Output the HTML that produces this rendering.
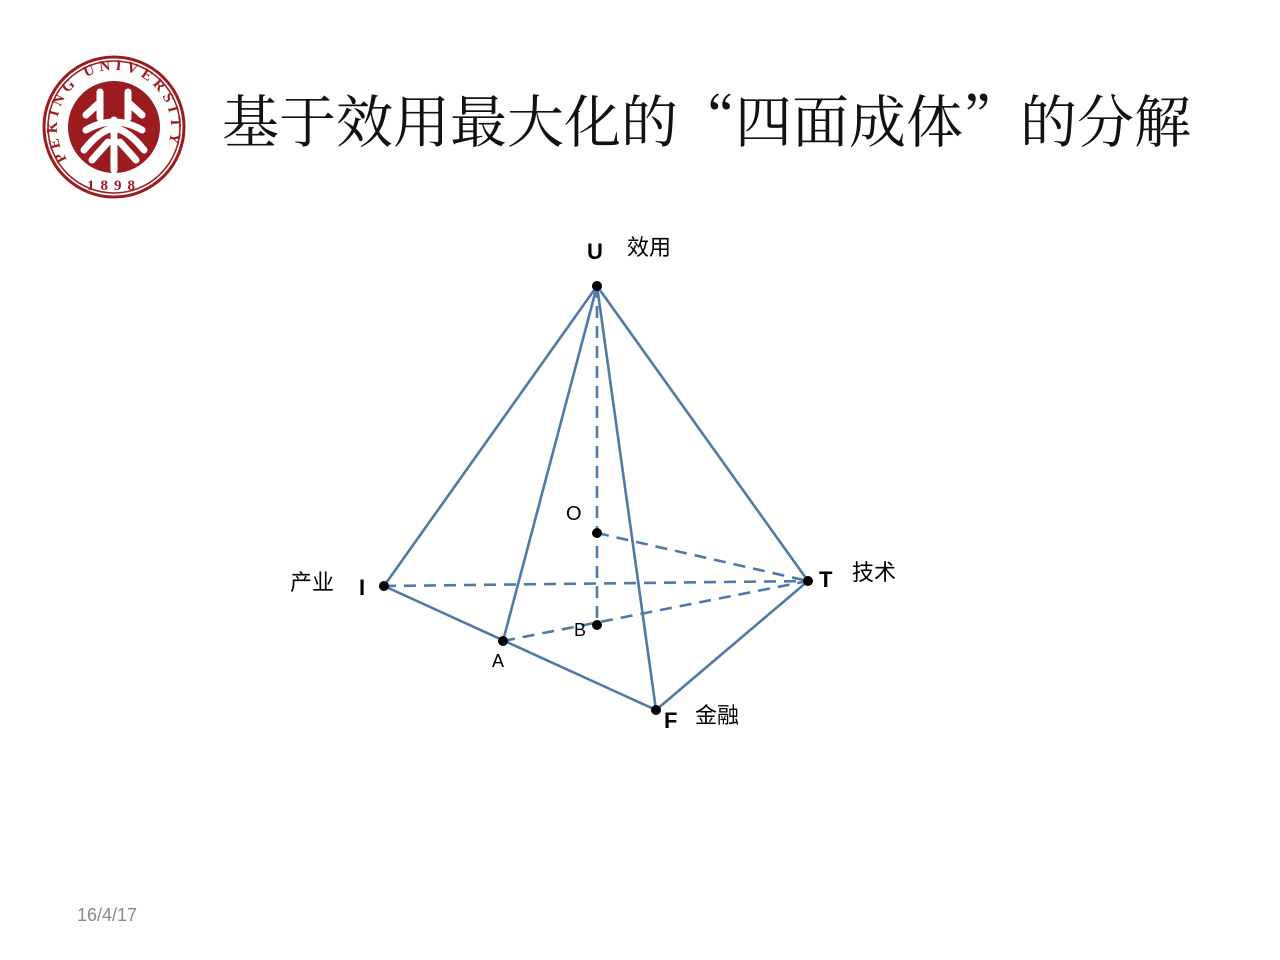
<!DOCTYPE html>
<html><head><meta charset="utf-8"><style>
body{margin:0;background:#fff;}
.wrap{position:relative;width:1280px;height:960px;overflow:hidden;background:#fff;}
.title{position:absolute;left:222px;top:78px;font-family:"Noto Serif CJK SC",serif;font-size:57px;color:#111;white-space:nowrap;line-height:80px;}
.date{position:absolute;left:77px;top:905px;font-family:"Liberation Sans",sans-serif;font-size:18px;color:#8a8a8a;}
</style></head><body><div class="wrap">
<svg width="1280" height="960" style="position:absolute;left:0;top:0">
<defs><path id="arc" d="M 70.3 163.6 A 57 57 0 1 1 157.7 163.6"/></defs>
<g>
<circle cx="114" cy="127" r="70" fill="#fff" stroke="#9b1b1f" stroke-width="3"/>
<circle cx="114" cy="127" r="66" fill="none" stroke="#9b1b1f" stroke-width="1.5"/>
<circle cx="114" cy="127" r="46" fill="#9b1b1f"/>
<text font-family="Liberation Serif,serif" font-size="15" font-weight="bold" fill="#9b1b1f" letter-spacing="4.5"><textPath href="#arc" startOffset="2%">PEKING UNIVERSITY</textPath></text>
<text x="114" y="190" text-anchor="middle" font-family="Liberation Serif,serif" font-size="15" font-weight="bold" fill="#9b1b1f" letter-spacing="6">1898</text>
<g stroke="#fff" stroke-width="7" fill="none" stroke-linecap="round">
<path d="M100 92 L100 118 M128 92 L128 118 M86 115 L98 104 M142 115 L130 104 M114 120 L114 170 M86 130 Q100 122 114 122 Q128 122 142 130 M84 150 Q100 130 114 128 Q128 130 144 150 M92 160 L108 142 M136 160 L120 142"/>
</g>
</g>
<g stroke="#4f79a6" stroke-width="2.6" fill="none">
<line x1="597" y1="286" x2="384" y2="586"/>
<line x1="597" y1="286" x2="808" y2="581"/>
<line x1="597" y1="286" x2="503" y2="641"/>
<line x1="597" y1="286" x2="656" y2="710"/>
<line x1="384" y1="586" x2="656" y2="710"/>
<line x1="656" y1="710" x2="808" y2="581"/>
<g stroke-dasharray="12,8">
<line x1="597" y1="286" x2="597" y2="625"/>
<line x1="384" y1="586" x2="808" y2="581"/>
<line x1="597" y1="533" x2="808" y2="581"/>
<line x1="503" y1="641" x2="808" y2="581"/>
</g>
</g>
<g fill="#000">
<circle cx="597" cy="286" r="5"/><circle cx="384" cy="586" r="5"/><circle cx="808" cy="581" r="5"/>
<circle cx="656" cy="710" r="5"/><circle cx="503" cy="641" r="5"/><circle cx="597" cy="625" r="5"/><circle cx="597" cy="533" r="5"/>
</g>
<g font-family="Liberation Sans,'Noto Sans CJK SC',sans-serif" fill="#000">
<text x="587" y="259" font-size="22" font-weight="bold">U</text>
<text x="627" y="255" font-size="22">效用</text>
<text x="359" y="595" font-size="22" font-weight="bold">I</text>
<text x="290" y="590" font-size="22">产业</text>
<text x="819" y="587" font-size="22" font-weight="bold">T</text>
<text x="852" y="580" font-size="22">技术</text>
<text x="664" y="728" font-size="22" font-weight="bold">F</text>
<text x="695" y="723" font-size="22">金融</text>
<text x="566" y="520" font-size="20">O</text>
<text x="574" y="636" font-size="18">B</text>
<text x="492" y="667" font-size="18">A</text>
</g>
</svg>
<div class="title">基于效用最大化的“四面成体”的分解</div>
<div class="date">16/4/17</div>
</div></body></html>
